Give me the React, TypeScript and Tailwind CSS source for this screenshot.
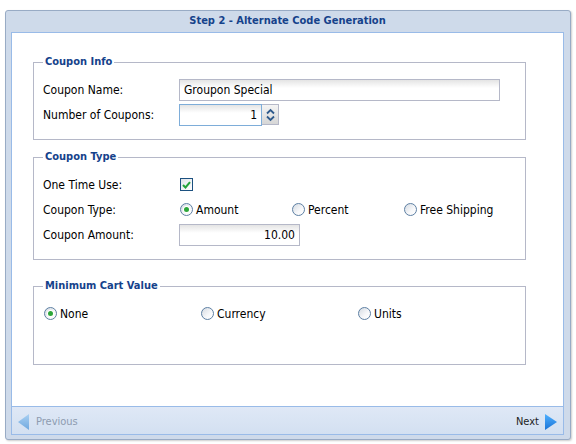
import React from 'react';

const font = "font-['DejaVu_Sans_Condensed','DejaVu_Sans',Tahoma,sans-serif]";

const Radio = ({ checked }: { checked?: boolean }) => (
    <span className="flex h-[13px] w-[13px] shrink-0 items-center justify-center rounded-full border border-[#5d7fa3] bg-[linear-gradient(135deg,#d5dbe2,#f7f8fa_60%,#ffffff)]">
        {checked && (
            <span className="flex h-[7px] w-[7px] items-center justify-center rounded-full bg-white">
                <span className="h-[5px] w-[5px] rounded-full bg-[#2ca63a]" />
            </span>
        )}
    </span>
);

const RadioOption = ({ label, checked, width }: { label: string; checked?: boolean; width: string }) => (
    <label className={`flex items-center gap-[3px] ${width}`}>
        <Radio checked={checked} />
        <span>{label}</span>
    </label>
);

const Field = ({ value, className, align = 'left', focused }: { value: string; className: string; align?: 'left' | 'right'; focused?: boolean }) => (
    <div
        className={`flex h-[22px] items-center border px-[4px] bg-[linear-gradient(#e4e4e4,#ffffff_8px)] ${focused ? 'border-[#7eadd9]' : 'border-[#b5b8c8]'} ${align === 'right' ? 'justify-end' : ''} ${className}`}
    >
        {value}
    </div>
);

const Row = ({ label, children }: { label: string; children: React.ReactNode }) => (
    <div className="flex h-[25px] items-center">
        <div className="w-[136px] shrink-0">{label}</div>
        {children}
    </div>
);

const Group = ({ title, className, children }: { title: string; className: string; children: React.ReactNode }) => (
    <fieldset className={`w-[493px] border border-[#b5b8c8] pl-[9px] pt-[8px] ${className}`}>
        <legend className="px-[2px] text-[11px] font-bold leading-[14px] text-[#15428b]">{title}</legend>
        {children}
    </fieldset>
);

export default function App() {
    return (
        <div className={`h-[444px] w-[576px] bg-white pl-[5px] pt-[10px] text-[12px] text-black ${font}`}>
            <div className="flex h-[430px] w-[566px] flex-col rounded-[3px] border border-[#98abc5] bg-[#cedaea] pl-[5px] pr-[6px] pb-[4px] shadow-[1px_1px_2px_rgba(0,0,0,0.2)]">
                <div className="flex h-[21px] items-center justify-center text-[11px] font-bold text-[#15428b]">
                    Step 2 - Alternate Code Generation
                </div>

                <div className="flex flex-1 flex-col border border-[#99bbe8]">
                    <div className="flex-1 bg-white pl-[21px] pt-[22px]">
                        <Group title="Coupon Info" className="pb-[12px]">
                            <Row label="Coupon Name:">
                                <Field value="Groupon Special" className="w-[321px]" />
                            </Row>
                            <Row label="Number of Coupons:">
                                <Field value="1" align="right" focused className="h-[21px] w-[83px]" />
                                <div className="flex h-[21px] w-[17px] flex-col items-center justify-center border border-l-0 border-[#b5b8c8] bg-[linear-gradient(#f4f4f4,#d6d6d6)]">
                                    <svg width="9" height="14" viewBox="0 0 9 14">
                                        <path d="M1 5.5 L4.5 2 L8 5.5" fill="none" stroke="#2f5a8c" strokeWidth="1.8" />
                                        <path d="M1 8.5 L4.5 12 L8 8.5" fill="none" stroke="#2f5a8c" strokeWidth="1.8" />
                                    </svg>
                                </div>
                            </Row>
                        </Group>

                        <Group title="Coupon Type" className="mt-[10px] pb-[12px]">
                            <Row label="One Time Use:">
                                <span className="ml-[1px] flex h-[13px] w-[13px] items-center justify-center border border-[#1c5180] bg-[linear-gradient(135deg,#dfe4ea,#ffffff)]">
                                    <svg width="9" height="8" viewBox="0 0 9 8">
                                        <path d="M1 4 L3.5 6.5 L8 1.2" fill="none" stroke="#21a33a" strokeWidth="2" />
                                    </svg>
                                </span>
                            </Row>
                            <Row label="Coupon Type:">
                                <div className="ml-[1px] flex items-center">
                                    <RadioOption label="Amount" checked width="w-[112px]" />
                                    <RadioOption label="Percent" width="w-[112px]" />
                                    <RadioOption label="Free Shipping" width="w-[112px]" />
                                </div>
                            </Row>
                            <Row label="Coupon Amount:">
                                <Field value="10.00" align="right" className="w-[121px]" />
                            </Row>
                        </Group>

                        <Group title="Minimum Cart Value" className="mt-[19px] pb-[38px]">
                            <div className="ml-[1px] flex h-[25px] items-center">
                                <RadioOption label="None" checked width="w-[157px]" />
                                <RadioOption label="Currency" width="w-[157px]" />
                                <RadioOption label="Units" width="w-[157px]" />
                            </div>
                        </Group>
                    </div>

                    <div className="flex h-[28px] items-center justify-between border-t border-[#99bbe8] bg-[linear-gradient(#dfe8f6,#d3e0f1)] pl-[6px] pr-[6px] pt-[3px] text-[11px]">
                        <div className="flex items-center gap-[7px] text-[#8d9bb0]">
                            <svg width="11" height="16" viewBox="0 0 11 16">
                                <defs>
                                    <linearGradient id="pg" x1="0" y1="0" x2="0" y2="1">
                                        <stop offset="0" stopColor="#a9d0f2" />
                                        <stop offset="1" stopColor="#6fa8df" />
                                    </linearGradient>
                                </defs>
                                <path d="M11 0 L0 8 L11 16 Z" fill="url(#pg)" />
                            </svg>
                            <span>Previous</span>
                        </div>
                        <div className="flex items-center gap-[6px] text-[#222]">
                            <span>Next</span>
                            <svg width="12" height="16" viewBox="0 0 12 16">
                                <defs>
                                    <linearGradient id="ng" x1="0" y1="0" x2="0" y2="1">
                                        <stop offset="0" stopColor="#4fb0ff" />
                                        <stop offset="1" stopColor="#1a73d6" />
                                    </linearGradient>
                                </defs>
                                <path d="M0 0 L12 8 L0 16 Z" fill="url(#ng)" />
                            </svg>
                        </div>
                    </div>
                </div>
            </div>
        </div>
    );
}
